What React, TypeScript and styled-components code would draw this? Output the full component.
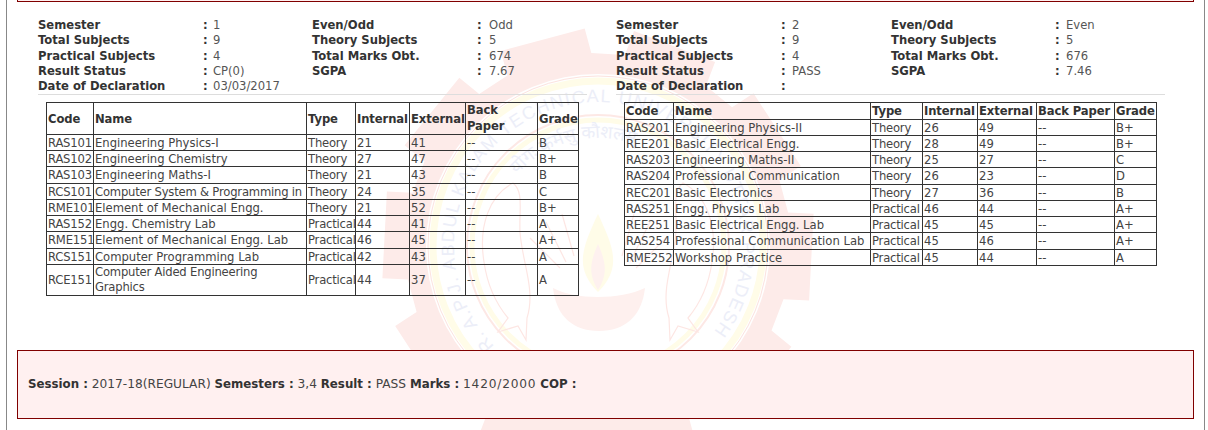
import React from 'react';
import styled, { createGlobalStyle } from 'styled-components';

type Subject = [string, string, string, string, string, string];

type Semester = {
    info: [string, string, string, string][];
    date: string;
    subjects: Subject[];
}

const first: Semester = {
    info: [
        ["Semester", "1", "Even/Odd", "Odd"],
        ["Total Subjects", "9", "Theory Subjects", "5"],
        ["Practical Subjects", "4", "Total Marks Obt.", "674"],
        ["Result Status", "CP(0)", "SGPA", "7.67"],
    ],
    date: "03/03/2017",
    subjects: [
        ["RAS101", "Engineering Physics-I", "Theory", "21", "41", "B"],
        ["RAS102", "Engineering Chemistry", "Theory", "27", "47", "B+"],
        ["RAS103", "Engineering Maths-I", "Theory", "21", "43", "B"],
        ["RCS101", "Computer System & Programming in", "Theory", "24", "35", "C"],
        ["RME101", "Element of Mechanical Engg.", "Theory", "21", "52", "B+"],
        ["RAS152", "Engg. Chemistry Lab", "Practical", "44", "41", "A"],
        ["RME151", "Element of Mechanical Engg. Lab", "Practical", "46", "45", "A+"],
        ["RCS151", "Computer Programming Lab", "Practical", "42", "43", "A"],
        ["RCE151", "Computer Aided Engineering Graphics", "Practical", "44", "37", "A"],
    ],
};

const second: Semester = {
    info: [
        ["Semester", "2", "Even/Odd", "Even"],
        ["Total Subjects", "9", "Theory Subjects", "5"],
        ["Practical Subjects", "4", "Total Marks Obt.", "676"],
        ["Result Status", "PASS", "SGPA", "7.46"],
    ],
    date: "",
    subjects: [
        ["RAS201", "Engineering Physics-II", "Theory", "26", "49", "B+"],
        ["REE201", "Basic Electrical Engg.", "Theory", "28", "49", "B+"],
        ["RAS203", "Engineering Maths-II", "Theory", "25", "27", "C"],
        ["RAS204", "Professional Communication", "Theory", "26", "23", "D"],
        ["REC201", "Basic Electronics", "Theory", "27", "36", "B"],
        ["RAS251", "Engg. Physics Lab", "Practical", "46", "44", "A+"],
        ["REE251", "Basic Electrical Engg. Lab", "Practical", "45", "45", "A+"],
        ["RAS254", "Professional Communication Lab", "Practical", "45", "46", "A+"],
        ["RME252", "Workshop Practice", "Practical", "45", "44", "A"],
    ],
};

const CX = 598;
const CY = 246;

// gear outline round the logo, 10 teeth, a tooth points left at -87deg
const gearPath = () => {
    const pts: string[] = [];
    const teeth = 10;
    const deg = Math.PI / 180;
    const pt = (r: number, a: number) => `${(CX + r * Math.sin(a)).toFixed(1)},${(CY - r * Math.cos(a)).toFixed(1)}`;
    for (let i = 0; i < teeth; i++) {
        const a = (-87 + i * 36) * deg;
        pts.push(pt(193, a - 13 * deg));
        pts.push(pt(218, a - 11.5 * deg));
        pts.push(pt(218, a + 11.5 * deg));
        pts.push(pt(193, a + 13 * deg));
    }
    return "M" + pts.join(" L") + " Z";
};

const Watermark = () => (
    <WatermarkSvg width="1208" height="430" viewBox="0 0 1208 430">
        <defs>
            <path id="ringText" d={`M ${CX - 93} ${CY + 110} A 144 144 0 1 1 ${CX + 93} ${CY + 110}`} />
            <path id="mottoText" d={`M ${CX - 108} ${CY} A 108 108 0 0 1 ${CX + 108} ${CY}`} />
        </defs>
        <path d={gearPath()} fill="#fdebe9" />
        <circle cx={CX} cy={CY} r="172" fill="#fff" />
        <circle cx={CX} cy={CY} r="170" fill="none" stroke="#fce3df" strokeWidth="1" />
        <circle cx={CX} cy={CY} r="165" fill="none" stroke="#fffce8" strokeWidth="7" />
        <circle cx={CX} cy={CY} r="131" fill="none" stroke="#fde8e5" strokeWidth="2" />
        <circle cx={CX} cy={CY} r="126" fill="none" stroke="#fffce8" strokeWidth="5" />
        <RingText>
            <textPath href="#ringText">DR. A.P.J. ABDUL KALAM TECHNICAL UNIVERSITY UTTAR PRADESH</textPath>
        </RingText>
        <MottoText textAnchor="middle">
            <textPath href="#mottoText" startOffset="42%">योगः कर्मसु कौशलम्</textPath>
        </MottoText>
        <path d="M 598 214 C 582 248 574 268 598 292 C 622 268 614 248 598 214 Z" fill="#fffce8" />
        <path d="M 598 244 C 590 262 588 274 598 290 C 608 274 606 262 598 244 Z" fill="#fef1ef" />
        <path d="M 553 288 C 575 300 620 300 645 288 C 642 316 625 331 599 331 C 573 331 556 316 553 288 Z" fill="#fef0ee" />
        <g fill="none" stroke="#fde6e3" strokeWidth="1.2">
            <path d="M 513 183 C 490 195 478 225 484 262 C 488 290 498 306 508 318 L 498 332 L 518 326 L 526 340 L 527 318 C 536 290 522 262 520 232 C 519 210 524 192 513 183 Z" />
            <path d="M 683 183 C 706 195 718 225 712 262 C 708 290 698 306 688 318 L 698 332 L 678 326 L 670 340 L 669 318 C 660 290 674 262 676 232 C 677 210 672 192 683 183 Z" />
            <path d="M 560 268 L 530 238 M 566 262 L 546 222 M 574 256 L 562 214 M 636 268 L 666 238 M 630 262 L 650 222 M 622 256 L 634 214" />
        </g>
    </WatermarkSvg>
);

type PanelProps = {
    data: Semester;
    columns: string;
    grid: string;
    tableWidth: number;
    wrapBackPaper?: boolean;
}

const SemesterPanel = (props: PanelProps) => {
    const { data } = props;
    return (
        <Panel>
            <InfoGrid columns={props.grid}>
                {data.info.map(row => (
                    <React.Fragment key={row[0]}>
                        <Label>{row[0]}</Label>
                        <Label>:</Label>
                        <Value>{row[1]}</Value>
                        <Label>{row[2]}</Label>
                        <Label>:</Label>
                        <Value>{row[3]}</Value>
                    </React.Fragment>
                ))}
                <Label>Date of Declaration</Label>
                <Label>:</Label>
                <Value>{data.date}</Value>
            </InfoGrid>
            <Rule />
            <MarksTable width={props.tableWidth}>
                <colgroup>
                    {props.columns.split(" ").map((w, idx) => <col key={idx} width={w} />)}
                </colgroup>
                <thead>
                    <tr>
                        <Th>Code</Th>
                        <Th>Name</Th>
                        <Th>Type</Th>
                        <Th>Internal</Th>
                        <Th>External</Th>
                        <Th tall={props.wrapBackPaper}>Back Paper</Th>
                        <Th>Grade</Th>
                    </tr>
                </thead>
                <tbody>
                    {data.subjects.map(s => (
                        <tr key={s[0]}>
                            <Td tight>{s[0]}</Td>
                            <Td tight={s[1].length > 31} tall={s[1].length > 32}>{s[1]}</Td>
                            <Td tight>{s[2]}</Td>
                            <Td>{s[3]}</Td>
                            <Td>{s[4]}</Td>
                            <Td>--</Td>
                            <Td>{s[5]}</Td>
                        </tr>
                    ))}
                </tbody>
            </MarksTable>
        </Panel>
    );
};

const App = () => {
    return (
        <Page>
            <GlobalStyle />
            <Watermark />
            <Content>
                <TopBox />
                <Results>
                    <SemesterPanel data={first} grid="165px 10px 99px 165px 12px 98px" columns="47 213 49 54 56 72 41" tableWidth={532} wrapBackPaper />
                    <SemesterPanel data={second} grid="165px 11px 99px 164px 11px 99px" columns="49 197 52 55 59 78 42" tableWidth={532} />
                </Results>
                <Summary>
                    <b>Session :</b> 2017-18(REGULAR) <b>Semesters :</b> 3,4 <b>Result :</b> PASS <b>Marks :</b> <Marks>1420/2000</Marks> <b>COP :</b>
                </Summary>
            </Content>
        </Page>
    );
};

const GlobalStyle = createGlobalStyle`
    html, body {
        margin: 0;
        background-color: #fff;
    }
    body {
        font-family: "DejaVu Sans", Verdana, sans-serif;
        font-size: 11.6px;
        color: #444;
    }
`;

const Page = styled.div`
    position: relative;
    width: 1197px;
    height: 430px;
    margin-left: 6px;
    border-left: 1px solid #888;
    border-right: 1px solid #888;
    overflow: hidden;
`;

const WatermarkSvg = styled.svg`
    position: absolute;
    left: -7px;
    top: 0;
`;

const RingText = styled.text`
    font-family: "Liberation Sans", sans-serif;
    font-size: 18px;
    letter-spacing: 1.5px;
    fill: #eceef8;
`;

const MottoText = styled.text`
    font-family: "Noto Sans", sans-serif;
    font-size: 18px;
    fill: #eceef8;
`;

const Content = styled.div`
    position: relative;
    padding: 0 10px;
`;

const TopBox = styled.div`
    height: 1px;
    border: 1px solid #800000;
    border-top: none;
    background-color: #fff0f0;
`;

const Results = styled.div`
    display: grid;
    grid-template-columns: 549px 549px;
    column-gap: 29px;
    padding: 16px 0 0 21px;
    height: 348px;
    box-sizing: border-box;
`;

const Panel = styled.div`
    display: flex;
    flex-direction: column;
    align-items: flex-start;
`;

const InfoGrid = styled.div<{columns: string}>`
    display: grid;
    grid-template-columns: ${props => props.columns};
    grid-auto-rows: 15.25px;
    line-height: 15.25px;
`;

const Label = styled.div`
    font-weight: bold;
    color: #333;
    white-space: nowrap;
`;

const Value = styled.div`
    color: #555;
    white-space: nowrap;
`;

const Rule = styled.div`
    width: 100%;
    height: 1px;
    margin: 0 0 7px;
    background-color: #ddd;
`;

const MarksTable = styled.table<{width: number}>`
    width: ${props => props.width}px;
    margin-left: 8px;
    table-layout: fixed;
    border-collapse: collapse;
`;

const Th = styled.th<{tall?: boolean}>`
    padding: ${props => props.tall ? "0" : "1px"} 0 0 1px;
    border: 1px solid #333;
    text-align: left;
    color: #333;
    letter-spacing: -0.1px;
    line-height: ${props => props.tall ? "15.25px" : "14.25px"};
`;

const Td = styled.td<{tight?: boolean; tall?: boolean}>`
    padding: ${props => props.tall ? "0" : "1px"} 0 0 1px;
    border: 1px solid #333;
    color: #444;
    letter-spacing: ${props => props.tight ? "-0.2px" : "0"};
    line-height: ${props => props.tall ? "15.25px" : "14.25px"};
`;

const Summary = styled.div`
    height: 69px;
    box-sizing: border-box;
    padding: 0 10px;
    line-height: 67px;
    font-size: 12.2px;
    border: 1px solid #800000;
    background-color: #fff0f0;
    color: #444;
    b {
        font-size: 11.8px;
        color: #333;
    }
`;

const Marks = styled.span`
    letter-spacing: 0.8px;
`;

export default App;
